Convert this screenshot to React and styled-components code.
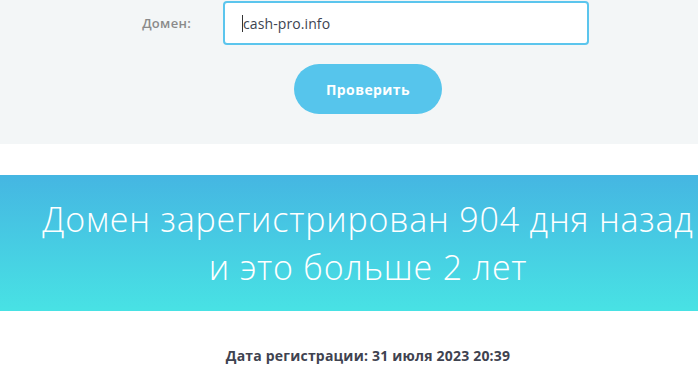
import styled, {createGlobalStyle} from 'styled-components';

const Global = createGlobalStyle`
  html, body {
    margin: 0;
    padding: 0;
    background: #fff;
    overflow: hidden;
  }
  body {
    font-family: "Open Sans", "Noto Sans", sans-serif;
  }
`;

const Page = styled.div`
  width: 736px;
  display: flex;
  flex-flow: column;
`;

const FormSection = styled.section`
  background: #f3f6f7;
  height: 144px;
  display: flex;
  flex-flow: column;
  align-items: stretch;
  padding-top: 1px;
  box-sizing: border-box;
`;

const Row = styled.div`
  display: grid;
  grid-template-columns: 223px 366px;
  align-items: center;
`;

const Label = styled.label`
  text-align: right;
  padding-right: 32px;
  font-size: 13px;
  font-weight: 600;
  letter-spacing: 0.3px;
  color: #8a8a8a;
`;

const Input = styled.div`
  height: 44px;
  box-sizing: border-box;
  border: 2px solid #5bc5ed;
  border-radius: 4px;
  background: #fff;
  display: flex;
  align-items: center;
  padding-left: 17px;
  font-size: 14px;
  letter-spacing: 0.1px;
  color: #3d4451;
`;

const Caret = styled.span`
  display: inline-block;
  width: 1px;
  height: 17px;
  background: #333;
`;

const Button = styled.button`
  align-self: center;
  margin-top: 19px;
  width: 148px;
  height: 50px;
  border: none;
  border-radius: 25px;
  background: #56c5ec;
  color: #fff;
  font-family: inherit;
  font-size: 14px;
  font-weight: 700;
  letter-spacing: 0.4px;
`;

const Banner = styled.section`
  margin-top: 31px;
  height: 136px;
  background: linear-gradient(180deg, #45b6e2 0%, #48e2e4 100%);
  color: #fff;
  display: flex;
  flex-flow: column;
  align-items: center;
  justify-content: center;
  text-align: center;
`;

const Line = styled.div`
  font-size: 34px;
  font-weight: 300;
  letter-spacing: 0.8px;
  line-height: 48px;
  white-space: nowrap;
`;

const RegDate = styled.div`
  margin-top: 35px;
  text-align: center;
  font-size: 14px;
  font-weight: 700;
  letter-spacing: 0.2px;
  color: #3f4350;
`;

export default function App() {
  return (
    <Page>
      <Global/>
      <FormSection>
        <Row>
          <Label>Домен:</Label>
          <Input><Caret/>cash-pro.info</Input>
        </Row>
        <Button>Проверить</Button>
      </FormSection>
      <Banner>
        <Line>Домен зарегистрирован 904 дня назад</Line>
        <Line>и это больше 2 лет</Line>
      </Banner>
      <RegDate>Дата регистрации: 31 июля 2023 20:39</RegDate>
    </Page>
  );
}
